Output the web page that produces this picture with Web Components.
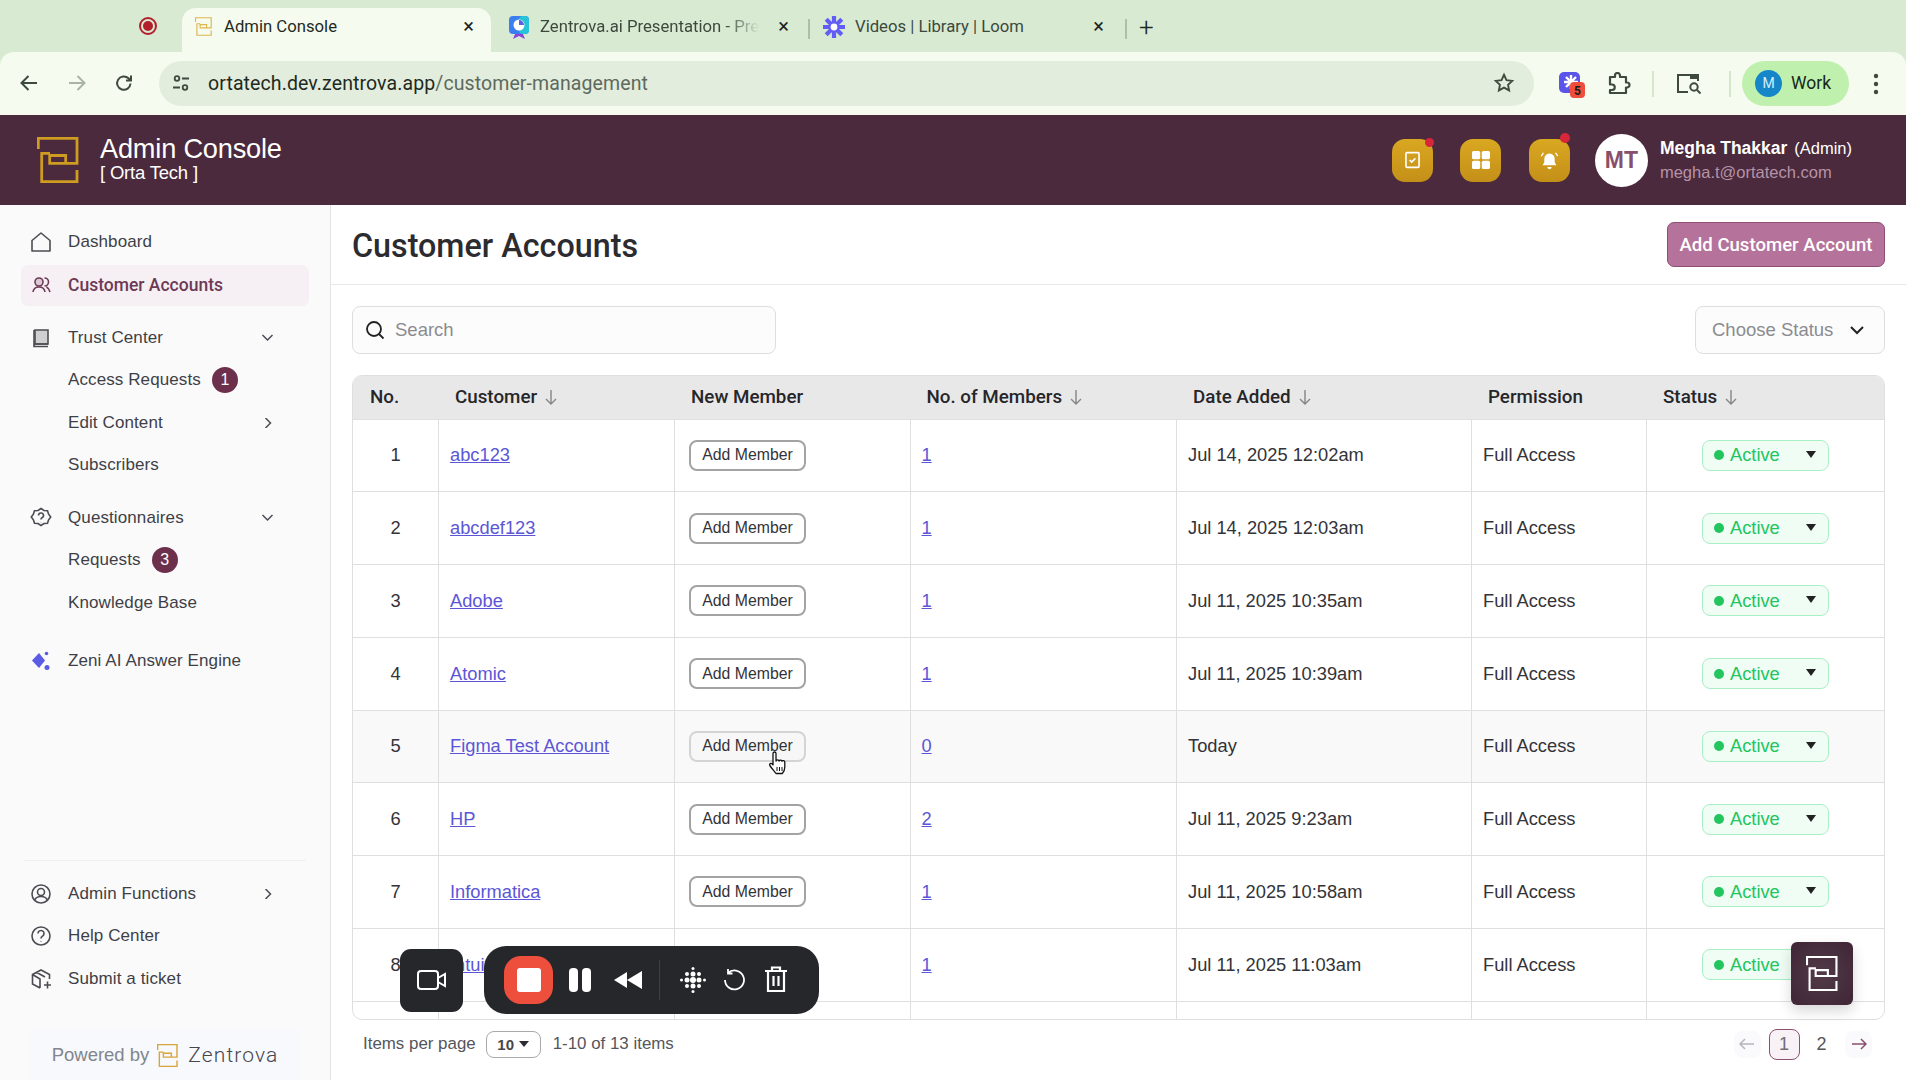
<!DOCTYPE html>
<html lang="en">
<head>
<meta charset="utf-8">
<title>Admin Console</title>
<style>
  html, body { margin: 0; height: 100%; overflow: hidden; background: #fff; }
  body { font-family: "Liberation Sans", Arial, sans-serif; display: flex; flex-direction: column; height: 1080px; }
</style>
</head>
<body>
<browser-frame></browser-frame>
<app-header></app-header>
<app-shell>
  <side-nav slot="nav"></side-nav>
  <customer-page></customer-page>
</app-shell>
<record-bar></record-bar>
<logo-fab></logo-fab>
<hand-cursor></hand-cursor>

<script>
const LOGO = `<path d="M1.300 12V1.300H40V26.300H12.700V18.500H28.700V26.300M13 16.300H4.700V44.700H40V33" fill="none" stroke="currentColor" stroke-width="2.800"/>`

class BrowserFrame extends HTMLElement {
  constructor() {
    super()
    this.attachShadow({ mode: 'open' }).innerHTML = /* html */`
      <style>
        :host { display: block; background: #d9ead3; font-family: Roboto, "Liberation Sans", sans-serif; color: #1f2a1f; }
        .tabs { height: 52px; display: flex; align-items: flex-end; padding-left: 182px; box-sizing: border-box; position: relative; }
        .rec { position: absolute; left: 139px; top: 17px; width: 18px; height: 18px; border-radius: 50%; border: 2px solid #b3202c; box-sizing: border-box; background: #d9ead3; }
        .rec::after { content: ''; position: absolute; inset: 2px; border-radius: 50%; background: #b3202c; }
        .tab { height: 44px; display: flex; align-items: center; font-size: 16.700px; box-sizing: border-box; position: relative; padding-bottom: 7px; }
        .tab.on { width: 309px; background: #f5fbef; border-radius: 14px 14px 0 0; padding-left: 13px; }
        .tab.two { width: 317px; padding-left: 17px; color: #3c483c; }
        .tab.three { width: 315px; padding-left: 12px; color: #3c483c; }
        .tab svg { flex: none; }
        .tab span { margin-left: 12px; white-space: nowrap; }
        .tab.two span { margin-left: 10px; -webkit-mask-image: linear-gradient(90deg, #000 85%, transparent); mask-image: linear-gradient(90deg, #000 85%, transparent); }
        .tab.three span { margin-left: 9px; }
        .x { position: absolute; font-size: 20px; line-height: 20px; top: 8px; color: #222; }
        .sep { width: 2px; height: 20px; background: #aebfa8; margin-bottom: 13px; flex: none; }
        .plus { font-size: 26px; line-height: 26px; margin: 0 0 12px 12px; font-weight: 300; }
        .bar { height: 63px; background: #f5fbef; border-radius: 14px 14px 0 0; display: flex; align-items: center; box-sizing: border-box; padding-bottom: 1px; }
        .nav { width: 159px; display: flex; align-items: center; flex: none; position: relative; height: 30px; }
        .nav svg { position: absolute; }
        .omni { width: 1375px; height: 45px; border-radius: 23px; background: #e3eddd; display: flex; align-items: center; flex: none; position: relative; }
        .omni .url { margin-left: 49px; font-size: 19.500px; color: #5d6a5d; letter-spacing: .1px; }
        .omni .url b { font-weight: 400; color: #1e2a1e; }
        .tools { flex: 1; position: relative; height: 45px; }
        .tools > * { position: absolute; }
        .pill { left: 208px; top: 0; width: 107px; height: 45px; border-radius: 23px; background: #bff0ae; display: flex; align-items: center; font-size: 17.500px; color: #16281a; }
        .pill i { width: 27px; height: 27px; border-radius: 50%; background: #1587c9; color: #d8eefb; font-style: normal; font-size: 14px; display: grid; place-items: center; margin: 0 9px 0 13px; }
        .vline { width: 2px; height: 26px; top: 10px; background: #d6e6cc; }
      </style>
      <div class="tabs">
        <div class="rec"></div>
        <div class="tab on">
          <svg width="17" height="19" viewBox="0 0 42 46" style="color:#e0b54a">${LOGO}</svg>
          <span>Admin Console</span><div class="x" style="right:17px">×</div>
        </div>
        <div class="tab two">
          <svg width="22" height="24" viewBox="0 0 22 24"><rect x="1" y="1" width="20" height="18" rx="4" fill="#3b7ef0"/><rect x="11" y="1" width="10" height="18" rx="4" fill="#27c4d8"/><circle cx="11" cy="10" r="5.500" fill="#fff"/><path d="M11 10V5a5 5 0 0 1 5 5z" fill="#5b5fe0"/><path d="M7 19l-2 5 6-3 6 3-2-5z" fill="#8a46d8"/></svg>
          <span>Zentrova.ai Presentation - Pre</span><div class="x" style="right:19px">×</div>
        </div>
        <div class="sep"></div>
        <div class="tab three">
          <svg width="24" height="24" viewBox="0 0 24 24"><g stroke="#625df5" stroke-width="4.200"><path d="M12 1v22M1 12h22M4.200 4.200l15.600 15.600M19.800 4.200L4.200 19.800"/></g><circle cx="12" cy="12" r="3.400" fill="#fff"/></svg>
          <span>Videos | Library | Loom</span><div class="x" style="right:21px">×</div>
        </div>
        <div class="sep"></div>
        <div class="plus">+</div>
      </div>
      <div class="bar">
        <div class="nav">
          <svg style="left:19px" width="20" height="20" viewBox="0 0 20 20" fill="none" stroke="#3f4a3f" stroke-width="2"><path d="M18 10H3M9.500 3L2.500 10l7 7"/></svg>
          <svg style="left:67px" width="20" height="20" viewBox="0 0 20 20" fill="none" stroke="#a9b4a4" stroke-width="2"><path d="M2 10h15M10.500 3l7 7-7 7"/></svg>
          <svg style="left:114px" width="20" height="20" viewBox="0 0 20 20" fill="none" stroke="#3f4a3f" stroke-width="2"><path d="M16.500 10.500a6.700 6.700 0 1 1-2-5.200L17 7.500M17 2.500v5h-5"/></svg>
        </div>
        <div class="omni">
          <svg style="position:absolute;left:13px" width="18" height="18" viewBox="0 0 18 18" fill="none" stroke="#3f4a3f" stroke-width="1.800"><circle cx="5" cy="4.500" r="2.300"/><path d="M10 4.500h7M1 13.500h7"/><circle cx="13" cy="13.500" r="2.300"/></svg>
          <div class="url"><b>ortatech.dev.zentrova.app</b>/customer-management</div>
          <svg style="position:absolute;right:19px" width="22" height="22" viewBox="0 0 24 24" fill="none" stroke="#3f4a3f" stroke-width="2"><path d="M12 3l2.700 5.800 6.300.800-4.600 4.300 1.200 6.200L12 17l-5.600 3.100 1.200-6.200L3 9.600l6.300-.8z"/></svg>
        </div>
        <div class="tools">
          <svg style="left:25px;top:10px" width="26" height="28" viewBox="0 0 26 28"><rect x="0" y="1" width="21" height="21" rx="5" fill="#5a55e8"/><g stroke="#fff" stroke-width="2.400"><path d="M12 4v14M5 11h14M7 6l10 10M17 6L7 16"/></g><rect x="11" y="11" width="15" height="16" rx="4" fill="#ee4f3d"/><text x="18.500" y="24" font-size="12" font-weight="700" text-anchor="middle" fill="#201a1a" font-family="Roboto">5</text></svg>
          <svg style="left:73px;top:11px" width="24" height="24" viewBox="0 0 24 24" fill="none" stroke="#3f4a3f" stroke-width="2.200"><path d="M3 5h5V3.500a2.500 2.500 0 0 1 5 0V5h6v5.500h1a2.500 2.500 0 0 1 0 5h-1V21H3v-3h2a2.600 2.600 0 0 0 0-5.500H3z" stroke-linejoin="round"/></svg>
          <div class="vline" style="left:118px"></div>
          <svg style="left:142px;top:11px" width="26" height="24" viewBox="0 0 26 24" fill="none" stroke="#3f4a3f" stroke-width="2"><path d="M12 20H2V3h20v6"/><rect x="14" y="2" width="8" height="5" fill="#3f4a3f" stroke="none"/><circle cx="18" cy="15" r="3.700"/><path d="M21 18l3.500 3.500"/></svg>
          <div class="vline" style="left:195px"></div>
          <div class="pill"><i>M</i>Work</div>
          <svg style="left:339px;top:12px" width="6" height="22" viewBox="0 0 6 22" fill="#3f4a3f"><circle cx="3" cy="3" r="2.200"/><circle cx="3" cy="11" r="2.200"/><circle cx="3" cy="19" r="2.200"/></svg>
        </div>
      </div>`
  }
}
customElements.define('browser-frame', BrowserFrame)

class HeaderAction extends HTMLElement {
  constructor() {
    super()
    this.attachShadow({ mode: 'open' }).innerHTML = /* html */`
      <style>
        :host { display: grid; place-items: center; width: 41px; height: 43px; border-radius: 13px; background: linear-gradient(#d9a821, #c48f18); position: relative; }
        :host([dot])::after { content: ''; position: absolute; right: -1px; top: -1px; width: 9px; height: 9px; border-radius: 50%; background: #d6273a; }
        :host([dot="high"])::after { top: -6px; right: 0; width: 10px; height: 10px; }
      </style>
      <slot></slot>`
  }
}
customElements.define('header-action', HeaderAction)

class AppHeader extends HTMLElement {
  constructor() {
    super()
    this.attachShadow({ mode: 'open' }).innerHTML = /* html */`
      <style>
        :host { display: flex; align-items: center; height: 90px; background: #4a2a3c; color: #fff; flex: none; padding: 0 54px 0 37px; }
        .logo { color: #cf9c22; flex: none; margin-right: 21px; }
        .title { line-height: 1; margin-top: -3px; }
        .t1 { font-size: 27.200px; letter-spacing: -.2px; margin-bottom: 2px; }
        .t2 { font-size: 18.500px; letter-spacing: -.2px; }
        .spacer { flex: 1; }
        .acts { display: flex; gap: 27.500px; margin-right: 25px; }
        .av { width: 53px; height: 53px; border-radius: 50%; background: #fff; color: #874f6c; display: grid; place-items: center; font-weight: 700; font-size: 23px; margin-right: 12px; }
        .nm { font-size: 17.500px; line-height: 24px; font-weight: 700; }
        .nm span { font-weight: 400; font-size: 16.500px; margin-left: 2px; }
        .em { font-size: 16.500px; color: #b792a7; line-height: 24px; }
      </style>
      <svg class="logo" width="42" height="46" viewBox="0 0 42 46">${LOGO}</svg>
      <div class="title"><div class="t1">Admin Console</div><div class="t2">[ Orta Tech ]</div></div>
      <div class="spacer"></div>
      <div class="acts">
        <header-action dot><svg width="17" height="18" viewBox="0 0 20 22" fill="none" stroke="#fff" stroke-width="2"><rect x="2" y="2" width="16" height="18" rx="1.500"/><path d="M6.500 11l2.500 2.500 4.500-4.500"/></svg></header-action>
        <header-action><svg width="18" height="18" viewBox="0 0 23 23" fill="#fff"><rect width="10.500" height="10.500" rx="2"/><rect x="12.500" width="10.500" height="10.500" rx="2"/><rect y="12.500" width="10.500" height="10.500" rx="2"/><rect x="12.500" y="12.500" width="10.500" height="10.500" rx="2"/></svg></header-action>
        <header-action dot="high"><svg width="19" height="21" viewBox="0 0 22 24" fill="#fff"><path d="M11 4a6 6 0 0 1 6 6v4l2 3.500H3L5 14v-4a6 6 0 0 1 6-6z"/><path d="M8.500 19.500h5a2.500 2.500 0 0 1-5 0z"/><path d="M1.500 7L4 3M20.500 7L18 3" stroke="#fff" stroke-width="1.500" fill="none"/></svg></header-action>
      </div>
      <div class="av">MT</div>
      <div><div class="nm">Megha Thakkar <span>(Admin)</span></div><div class="em">megha.t@ortatech.com</div></div>`
  }
}
customElements.define('app-header', AppHeader)

class AppShell extends HTMLElement {
  constructor() {
    super()
    this.attachShadow({ mode: 'open' }).innerHTML = /* html */`
      <style>
        :host { display: flex; flex: 1; min-height: 0; }
      </style>
      <slot name="nav"></slot><slot></slot>`
  }
}
customElements.define('app-shell', AppShell)

const NAV_ICONS = {
  home: '<path d="M2 20V9.500L11 2l9 7.500V20z" stroke-linejoin="round"/>',
  people: '<circle cx="9" cy="8" r="4" fill="#dcc9d3"/><path d="M3 18c.5-3.500 3-5 6-5s5.500 1.500 6 5M14.500 4a4 4 0 0 1 0 8M16.500 13c2 1 3 2.500 3.500 5"/>',
  book: '<path d="M5 3h13v14H5z" fill="#cfcfcf"/><path d="M4 3v16.500h14M4 19c0-1.500 1-2 2-2h12"/>',
  badge: '<path d="M11 1.500l3 2 3.500.2 1 3.300 2.200 3-2.200 3-1 3.300-3.500.2-3 2-3-2-3.500-.2-1-3.300-2.200-3 2.200-3 1-3.300 3.500-.2z"/><path d="M8.500 8.500a2.500 2.500 0 1 1 3.500 2.300c-.7.4-1 .9-1 1.700M11 15.200v.3"/>',
  user: '<circle cx="11" cy="11" r="9"/><circle cx="11" cy="9" r="3.500"/><path d="M4.500 17.500c1-3 3.500-4 6.500-4s5.500 1 6.500 4"/>',
  help: '<circle cx="11" cy="11" r="9"/><path d="M8 8.500a3 3 0 1 1 4.500 2.600c-1 .6-1.500 1.200-1.500 2.400M11 16v.500"/>',
  box: '<path d="M10 20L2.500 16V6.500L11 2l8.500 4.500V11M2.500 6.500L10 11v9M6.500 4.300l8.500 4.700M14 17h7M17.500 13.500v7"/>'
}

class NavItem extends HTMLElement {
  constructor() {
    super()
    this.attachShadow({ mode: 'open' })
  }

  connectedCallback() {
    const icon = this.getAttribute('icon')
    const caret = this.getAttribute('caret')
    const count = this.getAttribute('count')
    let iconHtml = ''
    if (icon === 'spark') {
      iconHtml = `<svg width="22" height="22" viewBox="0 0 22 22" fill="#5b5be6"><path d="M9 3l6 7.500L9 18l-7-7.500z"/><circle cx="16.500" cy="3.500" r="1.800"/><circle cx="17" cy="17.500" r="2.500"/></svg>`
    } else if (icon) {
      iconHtml = `<svg width="22" height="22" viewBox="0 0 22 22" fill="none" stroke="currentColor" stroke-width="1.600">${NAV_ICONS[icon]}</svg>`
    }
    const chevron = caret === 'down' ? 'M1.500 2l5 5 5-5' : 'M4.500 0l5 5-5 5'
    this.shadowRoot.innerHTML = /* html */`
      <style>
        :host { display: flex; align-items: center; height: 42.500px; box-sizing: border-box; padding-left: 30px; color: #3f3f46; font-size: 17px; letter-spacing: .1px; position: relative; }
        :host([active]) { color: #6d3a55; background: #f6eff3; border-radius: 7px; height: 41px; margin: 1px 21px 0 21px; padding-left: 9px; font-family: Roboto, "Liberation Sans", sans-serif; font-weight: 500; font-size: 17.500px; letter-spacing: 0; }
        .ic { width: 22px; height: 22px; margin-right: 16px; flex: none; color: #4c4c52; }
        :host([active]) .ic { color: #6d3a55; }
        :host([sub]) .ic { visibility: hidden; }
        .ct { width: 26px; height: 26px; border-radius: 50%; background: #6d304c; color: #fff; font-size: 16px; display: grid; place-items: center; margin-left: 11px; letter-spacing: 0; }
        .ch { position: absolute; left: 261px; top: 16px; }
      </style>
      <div class="ic">${iconHtml}</div><slot></slot>
      ${count ? `<div class="ct">${count}</div>` : ''}
      ${caret ? `<svg class="ch" width="13" height="10" viewBox="0 0 13 10" fill="none" stroke="#4c4c52" stroke-width="1.500"><path d="${chevron}"/></svg>` : ''}`
  }
}
customElements.define('nav-item', NavItem)

class SideNav extends HTMLElement {
  constructor() {
    super()
    this.attachShadow({ mode: 'open' }).innerHTML = /* html */`
      <style>
        :host { display: flex; flex-direction: column; width: 331px; flex: none; box-sizing: border-box; background: #fafafb; border-right: 1.500px solid #e4e4e6; padding-top: 16px; }
        .gap1 { height: 11px; }
        .gap1b { height: 10px; }
        .gap2 { height: 16px; }
        .foot { margin-top: auto; }
        .rule { height: 1px; background: #f0f0f1; margin: 0 24px 12px; }
        .powered { display: flex; align-items: center; justify-content: center; height: 50px; margin: 30px 30px 0; background: #f7f9fc; color: #83858c; font-size: 18.500px; box-sizing: border-box; }
        .powered svg { margin: 0 10px 0 8px; color: #d9a43a; }
        .zt { color: #46464c; font-family: Roboto, "Liberation Sans", sans-serif; font-weight: 300; font-size: 21px; letter-spacing: 1.100px; }
      </style>
      <nav-item icon="home">Dashboard</nav-item>
      <nav-item icon="people" active>Customer Accounts</nav-item>
      <div class="gap1"></div>
      <nav-item icon="book" caret="down">Trust Center</nav-item>
      <nav-item sub icon="book" count="1">Access Requests</nav-item>
      <nav-item sub icon="book" caret="right">Edit Content</nav-item>
      <nav-item sub icon="book">Subscribers</nav-item>
      <div class="gap1b"></div>
      <nav-item icon="badge" caret="down">Questionnaires</nav-item>
      <nav-item sub icon="book" count="3">Requests</nav-item>
      <nav-item sub icon="book">Knowledge Base</nav-item>
      <div class="gap2"></div>
      <nav-item icon="spark">Zeni AI Answer Engine</nav-item>
      <div class="foot">
        <div class="rule"></div>
        <nav-item icon="user" caret="right">Admin Functions</nav-item>
        <nav-item icon="help">Help Center</nav-item>
        <nav-item icon="box">Submit a ticket</nav-item>
        <div class="powered">Powered by<svg width="21" height="23" viewBox="0 0 42 46">${LOGO}</svg><span class="zt">Zentrova</span></div>
      </div>`
  }
}
customElements.define('side-nav', SideNav)

class HeadCell extends HTMLElement {
  constructor() {
    super()
    this.attachShadow({ mode: 'open' }).innerHTML = /* html */`
      <style>
        :host { display: flex; align-items: center; padding-left: 17px; font-family: Roboto, "Liberation Sans", sans-serif; font-weight: 500; font-size: 18.800px; color: #26262a; white-space: nowrap; }
        svg { margin-left: 8px; display: none; }
        :host([sort]) svg { display: block; }
      </style>
      <slot></slot>
      <svg width="12" height="16" viewBox="0 0 12 16" fill="none" stroke="#85858a" stroke-width="1.400"><path d="M6 1v14M1 10l5 5 5-5"/></svg>`
  }
}
customElements.define('head-cell', HeadCell)

class CustomerRow extends HTMLElement {
  constructor() {
    super()
    this.attachShadow({ mode: 'open' })
  }

  connectedCallback() {
    const a = n => this.getAttribute(n) || ''
    this.shadowRoot.innerHTML = /* html */`
      <style>
        :host { display: grid; grid-template-columns: var(--cols); height: 72.750px; box-sizing: border-box; border-top: 1.500px solid #dfdfdf; font-size: 18.300px; color: #333338; flex: none; }
        :host([hover]) { background: #f9f9f9; }
        .c { display: flex; align-items: center; padding-left: 11px; border-left: 1.500px solid #dfdfdf; white-space: nowrap; min-width: 0; }
        .c.no { border-left: 0; justify-content: center; padding: 0; }
        a { color: #5c56d6; text-decoration: underline; }
        button { width: 117px; height: 31px; border: 2px solid #a3a3a3; border-radius: 8px; background: #fff; font: inherit; font-size: 15.800px; color: #333338; padding: 0; margin-left: 3px; }
        :host([hover]) button { background: #f7f7f7; border-color: #d4d4d4; }
        .st { width: 127px; height: 31px; box-sizing: border-box; border: 1.500px solid #a9efc6; border-radius: 8px; background: #f0fdf5; color: #22c55e; display: flex; align-items: center; margin-left: 44px; position: relative; }
        .st i { width: 10px; height: 10px; border-radius: 50%; background: #22c55e; margin: 0 6px 0 11px; }
        .st b { position: absolute; right: 12px; top: 10px; border: 5.500px solid transparent; border-top: 7px solid #222; border-bottom: 0; }
      </style>
      <div class="c no">${a('no')}</div>
      <div class="c"><a>${a('name')}</a></div>
      <div class="c"><button>Add Member</button></div>
      <div class="c"><a>${a('members')}</a></div>
      <div class="c">${a('date')}</div>
      <div class="c">Full Access</div>
      <div class="c"><div class="st"><i></i><span>Active</span><b></b></div></div>`
  }
}
customElements.define('customer-row', CustomerRow)

class CustomerTable extends HTMLElement {
  constructor() {
    super()
    this.attachShadow({ mode: 'open' }).innerHTML = /* html */`
      <style>
        :host { display: flex; flex-direction: column; height: 645px; box-sizing: border-box; border: 1.500px solid #dfdfdf; border-radius: 10px; overflow: hidden; --cols: 85px 236px 235.500px 266.500px 295px 175px 1fr; }
        .head { display: grid; grid-template-columns: var(--cols); height: 42.500px; background: #e8e8e8; flex: none; }
        .rest { flex: 1; display: grid; grid-template-columns: var(--cols); border-top: 1.500px solid #dfdfdf; }
        .rest div { border-left: 1.500px solid #dfdfdf; }
        .rest div.no { border: 0; }
      </style>
      <div class="head">
        <head-cell>No.</head-cell>
        <head-cell sort>Customer</head-cell>
        <head-cell>New Member</head-cell>
        <head-cell sort>No. of Members</head-cell>
        <head-cell sort>Date Added</head-cell>
        <head-cell>Permission</head-cell>
        <head-cell sort>Status</head-cell>
      </div>
      <customer-row no="1" name="abc123" members="1" date="Jul 14, 2025 12:02am"></customer-row>
      <customer-row no="2" name="abcdef123" members="1" date="Jul 14, 2025 12:03am"></customer-row>
      <customer-row no="3" name="Adobe" members="1" date="Jul 11, 2025 10:35am"></customer-row>
      <customer-row no="4" name="Atomic" members="1" date="Jul 11, 2025 10:39am"></customer-row>
      <customer-row no="5" name="Figma Test Account" members="0" date="Today" hover></customer-row>
      <customer-row no="6" name="HP" members="2" date="Jul 11, 2025 9:23am"></customer-row>
      <customer-row no="7" name="Informatica" members="1" date="Jul 11, 2025 10:58am"></customer-row>
      <customer-row no="8" name="Intuit" members="1" date="Jul 11, 2025 11:03am"></customer-row>
      <div class="rest"><div class="no"></div><div></div><div></div><div></div><div></div><div></div><div></div></div>`
  }
}
customElements.define('customer-table', CustomerTable)

class CustomerPage extends HTMLElement {
  constructor() {
    super()
    this.attachShadow({ mode: 'open' }).innerHTML = /* html */`
      <style>
        :host { display: flex; flex-direction: column; flex: 1; min-width: 0; background: #fff; }
        .top { height: 80px; flex: none; box-sizing: border-box; border-bottom: 1.500px solid #e8e8e8; display: flex; align-items: center; justify-content: space-between; padding: 0 21px; }
        h1 { margin: 0; font-family: Roboto, "Liberation Sans", sans-serif; font-size: 32.300px; font-weight: 500; color: #2b2b30; padding-top: 3px; }
        .add { width: 218px; height: 45px; border: 1.500px solid #8f4f72; border-radius: 7px; background: #b5729a; color: #fff; font-family: Roboto, "Liberation Sans", sans-serif; font-size: 18.600px; font-weight: 500; padding: 0; }
        .tools { display: flex; justify-content: space-between; padding: 21px; flex: none; }
        .search, .status { height: 48px; box-sizing: border-box; border: 1.500px solid #dedede; border-radius: 8px; background: #fcfcfc; display: flex; align-items: center; color: #8b8b90; font-size: 18.500px; }
        .search { width: 424px; padding-left: 12px; }
        .search svg { margin-right: 10px; }
        .status { width: 190px; padding-left: 16px; justify-content: space-between; padding-right: 20px; }
        .body { padding: 0 21px; flex: none; }
        .foot { flex: 1; display: flex; align-items: center; padding: 0 0 12px 32px; font-size: 16.900px; color: #55555b; }
        .sel { width: 55px; height: 27px; box-sizing: border-box; border: 1.500px solid #a9a9ad; border-radius: 8px; margin: 0 12px 0 10px; display: flex; align-items: center; justify-content: center; font-size: 15px; font-weight: 600; color: #47474c; gap: 5px; }
        .sel i { border: 5px solid transparent; border-top: 6px solid #2b2b30; border-bottom: 0; }
        .pager { margin-left: auto; display: flex; align-items: center; margin-right: 34px; }
        .p { width: 31px; height: 31px; display: grid; place-items: center; font-size: 18px; box-sizing: border-box; border-radius: 8px; }
        .p.on { border: 1.500px solid #8a5170; background: #f8f1f6; color: #6f6f74; margin: 0 6.500px 0 8px; }
        .p.arrow { width: 27px; height: 27px; background: #faf9fc; }
      </style>
      <div class="top">
        <h1>Customer Accounts</h1>
        <button class="add">Add Customer Account</button>
      </div>
      <div class="tools">
        <div class="search"><svg width="20" height="20" viewBox="0 0 20 20" fill="none" stroke="#222" stroke-width="1.800"><circle cx="9" cy="9" r="7"/><path d="M14 14l4.500 4.500"/></svg>Search</div>
        <div class="status">Choose Status<svg width="14" height="9" viewBox="0 0 14 9" fill="none" stroke="#222" stroke-width="2"><path d="M1 1l6 6 6-6"/></svg></div>
      </div>
      <div class="body"><customer-table></customer-table></div>
      <div class="foot">
        Items per page
        <div class="sel">10<i></i></div>
        1-10 of 13 items
        <div class="pager">
          <div class="p arrow"><svg width="16" height="12" viewBox="0 0 16 12" fill="none" stroke="#b7b7bb" stroke-width="1.500"><path d="M15 6H1M6 1L1 6l5 5"/></svg></div>
          <div class="p on">1</div>
          <div class="p">2</div>
          <div class="p arrow" style="margin-left:8px"><svg width="16" height="12" viewBox="0 0 16 12" fill="none" stroke="#8a4f70" stroke-width="1.500"><path d="M1 6h14M10 1l5 5-5 5"/></svg></div>
        </div>
      </div>`
  }
}
customElements.define('customer-page', CustomerPage)

// loom style controls floating over the table
class RecordBar extends HTMLElement {
  constructor() {
    super()
    this.attachShadow({ mode: 'open' }).innerHTML = /* html */`
      <style>
        :host { position: fixed; left: 400px; top: 946px; display: flex; align-items: center; gap: 21px; }
        .cam { width: 63px; height: 63px; background: #26272b; border-radius: 11px; display: grid; place-items: center; }
        .bar { width: 335px; height: 68px; background: #26272b; border-radius: 22px; position: relative; }
        .bar > * { position: absolute; }
        .stop { left: 20px; top: 10px; width: 49px; height: 48px; background: #ee4f3d; border-radius: 17px; display: grid; place-items: center; }
        .stop i { width: 24px; height: 24px; background: #fff; border-radius: 3px; }
        .sep { left: 175px; top: 14px; width: 1px; height: 40px; background: #3d3e43; }
      </style>
      <div class="cam"><svg width="30" height="20" viewBox="0 0 30 20" fill="none" stroke="#fff" stroke-width="2"><rect x="1" y="1" width="20" height="18" rx="3"/><path d="M21 8l7-4v12l-7-4"/></svg></div>
      <div class="bar">
        <div class="stop"><i></i></div>
        <svg style="left:85px;top:22px" width="22" height="24" viewBox="0 0 22 24" fill="#fff"><rect width="9" height="24" rx="4"/><rect x="13" width="9" height="24" rx="4"/></svg>
        <svg style="left:130px;top:25px" width="28" height="18" viewBox="0 0 28 18" fill="#fff"><path d="M0 9l13-8v16zM13 9l15-9v18z"/></svg>
        <div class="sep"></div>
        <svg style="left:196px;top:21px" width="26" height="26" viewBox="0 0 26 26" fill="#fff"><circle cx="13" cy="13" r="3"/><circle cx="7" cy="13" r="2.500"/><circle cx="19" cy="13" r="2.500"/><circle cx="13" cy="7" r="2.500"/><circle cx="13" cy="19" r="2.500"/><circle cx="7" cy="7" r="2"/><circle cx="19" cy="7" r="2"/><circle cx="7" cy="19" r="2"/><circle cx="19" cy="19" r="2"/><circle cx="1.500" cy="13" r="1.500"/><circle cx="24.500" cy="13" r="1.500"/><circle cx="13" cy="1.500" r="1.500"/><circle cx="13" cy="24.500" r="1.500"/></svg>
        <svg style="left:239px;top:22px" width="22" height="23" viewBox="0 0 22 23" fill="none" stroke="#fff" stroke-width="1.800"><path d="M5 5a9.500 9.500 0 1 1-3 7M5 1v4.500h4.500"/></svg>
        <svg style="left:281px;top:20px" width="22" height="27" viewBox="0 0 22 27" fill="none" stroke="#fff" stroke-width="2.200"><path d="M0 5h22M7 5V1.500h8V5M3 5v20h16V5M8.500 10v10M13.500 10v10"/></svg>
      </div>`
  }
}
customElements.define('record-bar', RecordBar)

class LogoFab extends HTMLElement {
  constructor() {
    super()
    this.attachShadow({ mode: 'open' }).innerHTML = /* html */`
      <style>
        :host { position: fixed; left: 1791px; top: 942px; width: 62px; height: 63px; border-radius: 6px; background: radial-gradient(#523a49, #3f2535); color: #fff; display: grid; place-items: center; box-shadow: 0 6px 14px rgba(0,0,0,.16); }
      </style>
      <svg width="32" height="35" viewBox="0 0 42 46">${LOGO}</svg>`
  }
}
customElements.define('logo-fab', LogoFab)

class HandCursor extends HTMLElement {
  constructor() {
    super()
    this.attachShadow({ mode: 'open' }).innerHTML = /* html */`
      <style>
        :host { position: fixed; left: 768px; top: 751px; width: 20px; height: 24px; }
      </style>
      <svg width="20" height="24" viewBox="0 0 20 24" fill="#fff" stroke="#111" stroke-width="1.300" stroke-linejoin="round"><path d="M5 2.500a1.500 1.500 0 0 1 3 0V10c.3-1.500 3-1.500 3 0 .3-1.300 3-1.300 3 .3.400-1 2.800-.8 2.800 .9V16c0 3-1.500 5.500-2.500 6.500H8C7 21 4 17.500 1.800 14.500c-.8-1.500 1-3 2.500-1.500L5 14z"/><path d="M9 16v4M11.500 16v4M14 16v4" stroke-width="1"/></svg>`
  }
}
customElements.define('hand-cursor', HandCursor)
</script>
</body>
</html>
